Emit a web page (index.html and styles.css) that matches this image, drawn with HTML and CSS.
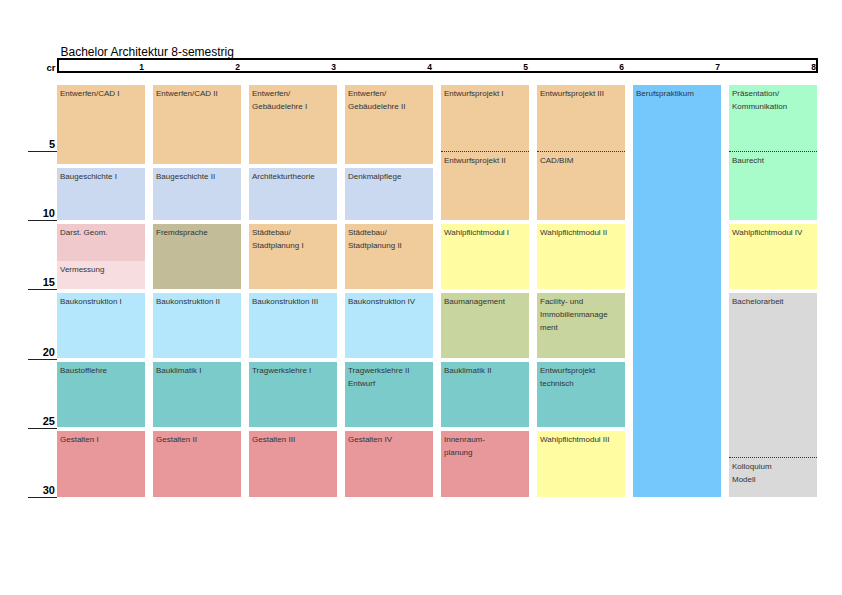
FILE: index.html
```html
<!DOCTYPE html>
<html lang="de">
<head>
<meta charset="utf-8">
<title>Bachelor Architektur 8-semestrig</title>
<link rel="stylesheet" href="styles.css">
</head>
<body>
<div class="page">
  <h1 class="title">Bachelor Architektur 8-semestrig</h1>
  <div class="head-row">
    <div class="cr">cr</div>
    <div class="bar">
      <span>1</span><span>2</span><span>3</span><span>4</span><span>5</span><span>6</span><span>7</span><span>8</span>
    </div>
  </div>
  <div class="body-row">
    <div class="axis">
      <div class="tick">5</div>
      <div class="tick">10</div>
      <div class="tick">15</div>
      <div class="tick">20</div>
      <div class="tick">25</div>
      <div class="tick">30</div>
    </div>
    <div class="chart">
      <!-- Semester 1 -->
      <div class="block orange c1 s0-6">Entwerfen/CAD I</div>
      <div class="block slate c1 s6-10">Baugeschichte I</div>
      <div class="block split c1 s10-15">
        <div class="part darst">Darst. Geom.</div>
        <div class="part verm">Vermessung</div>
      </div>
      <div class="block sky c1 s15-20">Baukonstruktion I</div>
      <div class="block teal c1 s20-25">Baustofflehre</div>
      <div class="block rose c1 s25-30">Gestalten I</div>

      <!-- Semester 2 -->
      <div class="block orange c2 s0-6">Entwerfen/CAD II</div>
      <div class="block slate c2 s6-10">Baugeschichte II</div>
      <div class="block khaki c2 s10-15">Fremdsprache</div>
      <div class="block sky c2 s15-20">Baukonstruktion II</div>
      <div class="block teal c2 s20-25">Bauklimatik I</div>
      <div class="block rose c2 s25-30">Gestalten II</div>

      <!-- Semester 3 -->
      <div class="block orange c3 s0-6">Entwerfen/<br>Gebäudelehre I</div>
      <div class="block slate c3 s6-10">Architekturtheorie</div>
      <div class="block orange c3 s10-15">Städtebau/<br>Stadtplanung I</div>
      <div class="block sky c3 s15-20">Baukonstruktion III</div>
      <div class="block teal c3 s20-25">Tragwerkslehre I</div>
      <div class="block rose c3 s25-30">Gestalten III</div>

      <!-- Semester 4 -->
      <div class="block orange c4 s0-6">Entwerfen/<br>Gebäudelehre II</div>
      <div class="block slate c4 s6-10">Denkmalpflege</div>
      <div class="block orange c4 s10-15">Städtebau/<br>Stadtplanung II</div>
      <div class="block sky c4 s15-20">Baukonstruktion IV</div>
      <div class="block teal c4 s20-25">Tragwerkslehre II<br>Entwurf</div>
      <div class="block rose c4 s25-30">Gestalten IV</div>

      <!-- Semester 5 -->
      <div class="block split orange c5 s0-10">
        <div class="part top5">Entwurfsprojekt I</div>
        <div class="part">Entwurfsprojekt II</div>
      </div>
      <div class="block yellow c5 s10-15">Wahlpflichtmodul I</div>
      <div class="block sage c5 s15-20">Baumanagement</div>
      <div class="block teal c5 s20-25">Bauklimatik II</div>
      <div class="block rose c5 s25-30">Innenraum-<br>planung</div>

      <!-- Semester 6 -->
      <div class="block split orange c6 s0-10">
        <div class="part top5">Entwurfsprojekt III</div>
        <div class="part">CAD/BIM</div>
      </div>
      <div class="block yellow c6 s10-15">Wahlpflichtmodul II</div>
      <div class="block sage c6 s15-20">Facility- und<br>Immobilienmanage<br>ment</div>
      <div class="block teal c6 s20-25">Entwurfsprojekt<br>technisch</div>
      <div class="block yellow c6 s25-30">Wahlpflichtmodul III</div>

      <!-- Semester 7 -->
      <div class="block blue c7 s0-30">Berufspraktikum</div>

      <!-- Semester 8 -->
      <div class="block split mint c8 s0-10">
        <div class="part top5">Präsentation/<br>Kommunikation</div>
        <div class="part">Baurecht</div>
      </div>
      <div class="block yellow c8 s10-15">Wahlpflichtmodul IV</div>
      <div class="block split grey c8 s15-30">
        <div class="part top12">Bachelorarbeit</div>
        <div class="part">Kolloquium<br>Modell</div>
      </div>
    </div>
  </div>
</div>
</body>
</html>
```

FILE: styles.css
```css
html, body {
  margin: 0;
  padding: 0;
  background: #ffffff;
}

body {
  font-family: "Liberation Sans", Arial, Helvetica, sans-serif;
  color: #000;
}

.page {
  padding: 45.5px 0 0 28px;
}

.title {
  margin: 0 0 0 32.5px;
  font-size: 12px;
  line-height: 12px;
  font-weight: normal;
  color: #000;
}

/* header with credit numbers */
.head-row {
  display: flex;
  height: 15px;
}

.cr {
  width: 29px;
  box-sizing: border-box;
  padding: 4px 1.5px 0 0;
  text-align: right;
  font-weight: bold;
  font-size: 9.5px;
  line-height: 12px;
}

.bar {
  width: 761px;
  height: 15px;
  box-sizing: border-box;
  border: 2px solid #000;
  display: grid;
  grid-template-columns: 86px repeat(7, 96px);
}

.bar span {
  text-align: right;
  font-weight: bold;
  font-size: 8.5px;
  line-height: 1;
  padding: 3px 1px 0 0;
}

/* body */
.body-row {
  display: flex;
  align-items: flex-start;
  margin-top: 12.5px;
  padding-bottom: 4px;
}

.axis {
  width: 29px;
  display: grid;
  grid-template-rows: repeat(6, 66.833px);
  row-gap: 2.5px;
}

.tick {
  display: flex;
  justify-content: flex-end;
  align-items: flex-end;
  box-sizing: border-box;
  padding: 0 2px 1px 0;
  border-bottom: 1px solid #222;
  font-weight: bold;
  font-size: 11px;
  line-height: 11px;
}

.chart {
  display: grid;
  grid-template-columns: repeat(8, 88px);
  grid-template-rows: repeat(30, 9.867px);
  column-gap: 8px;
  row-gap: 4px;
}

.block {
  box-sizing: border-box;
  padding: 2px 3px 0;
  font-size: 8px;
  line-height: 13px;
  color: #333;
  overflow: hidden;
}

.split {
  padding: 0;
  display: flex;
  flex-direction: column;
}

.part {
  box-sizing: border-box;
  padding: 2px 3px 0;
}

.part + .part {
  flex: 1;
}

.top5 {
  height: 66.5px;
  border-bottom: 1px dotted #333;
}

.top12 {
  height: 165.5px;
  border-bottom: 1px dotted #333;
}

.darst {
  height: 37.7px;
  background: #f0c9cd;
}

.verm {
  background: #f8dde0;
}

/* columns */
.c1 { grid-column: 1; }
.c2 { grid-column: 2; }
.c3 { grid-column: 3; }
.c4 { grid-column: 4; }
.c5 { grid-column: 5; }
.c6 { grid-column: 6; }
.c7 { grid-column: 7; }
.c8 { grid-column: 8; }

/* credit spans */
.s0-6   { grid-row: 1 / 7; }
.s6-10  { grid-row: 7 / 11; }
.s0-10  { grid-row: 1 / 11; }
.s10-15 { grid-row: 11 / 16; }
.s15-20 { grid-row: 16 / 21; }
.s20-25 { grid-row: 21 / 26; }
.s25-30 { grid-row: 26 / 31; }
.s15-30 { grid-row: 16 / 31; }
.s0-30  { grid-row: 1 / 31; }

/* colours */
.orange { background: #f0cb9c; }
.slate  { background: #cad9f0; }
.khaki  { background: #c2bc98; }
.sky    { background: #b4e7fb; }
.teal   { background: #7ccbcb; }
.rose   { background: #e8989b; }
.yellow { background: #fffca2; }
.sage   { background: #c9d59f; }
.blue   { background: #75c8fc; }
.mint   { background: #a8fcca; }
.grey   { background: #d9d9d9; }
```
